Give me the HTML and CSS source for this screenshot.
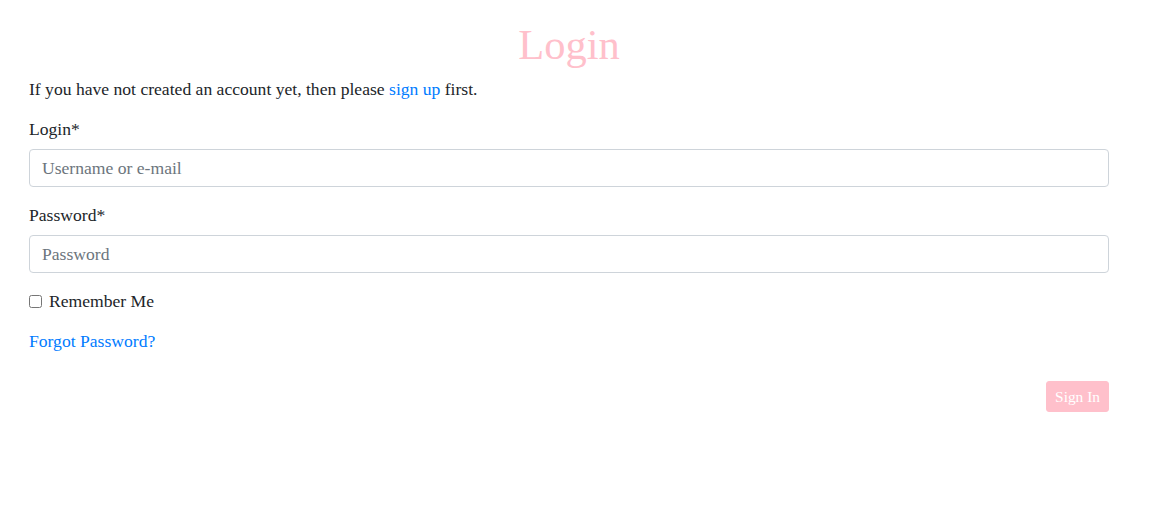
FILE: index.html
```html
<!DOCTYPE html>
<html lang="en">
<head>
<meta charset="utf-8">
<title>Login</title>
<link rel="stylesheet" href="styles.css">
</head>
<body>
<main class="page">
  <h1 class="title">Login</h1>
  <p class="intro">If you have not created an account yet, then please <a class="link" href="#">sign up</a> first.</p>
  <form class="form">
    <div class="group">
      <label class="label" for="login">Login*</label>
      <input class="control" id="login" type="text" placeholder="Username or e-mail">
    </div>
    <div class="group">
      <label class="label" for="password">Password*</label>
      <input class="control" id="password" type="password" placeholder="Password">
    </div>
    <div class="group check">
      <input class="checkbox" id="remember" type="checkbox">
      <label class="check-label" for="remember">Remember Me</label>
    </div>
    <div class="group">
      <a class="link" href="#">Forgot Password?</a>
    </div>
    <div class="actions">
      <button class="btn" type="button">Sign In</button>
    </div>
  </form>
</main>
</body>
</html>
```

FILE: styles.css
```css
* { box-sizing: border-box; }
html, body { margin: 0; padding: 0; background: #fff; }
body {
  font-family: "Liberation Serif", "Times New Roman", serif;
  font-size: 17.6px;
  line-height: 24px;
  color: #212529;
}
.page {
  padding: 21px 45px 0 29px;
}
.title {
  margin: 0 0 8px;
  font-size: 42.5px;
  line-height: 48px;
  font-weight: 400;
  color: #ffc0cb;
  text-align: center;
}
.intro { margin: 0 0 16px; }
.link { color: #007bff; text-decoration: none; }
.form { margin: 0; }
.group { margin-bottom: 16px; }
.label { display: block; margin-bottom: 8px; }
.control {
  display: block;
  width: 100%;
  height: 38px;
  padding: 6px 12px;
  font: inherit;
  line-height: 24px;
  color: #495057;
  background: #fff;
  border: 1px solid #ced4da;
  border-radius: 4px;
}
.control::placeholder { color: #6c757d; opacity: 1; }
.check { display: flex; align-items: center; gap: 7px; }
.checkbox { margin: 0; width: 13px; height: 13px; }
.actions { display: flex; justify-content: flex-end; margin-top: 28px; }
.btn {
  font: inherit;
  font-size: 15.4px;
  line-height: 21px;
  padding: 4px 8px;
  color: #fff;
  background: #ffc0cb;
  border: 1px solid #ffc0cb;
  border-radius: 3px;
}
```
